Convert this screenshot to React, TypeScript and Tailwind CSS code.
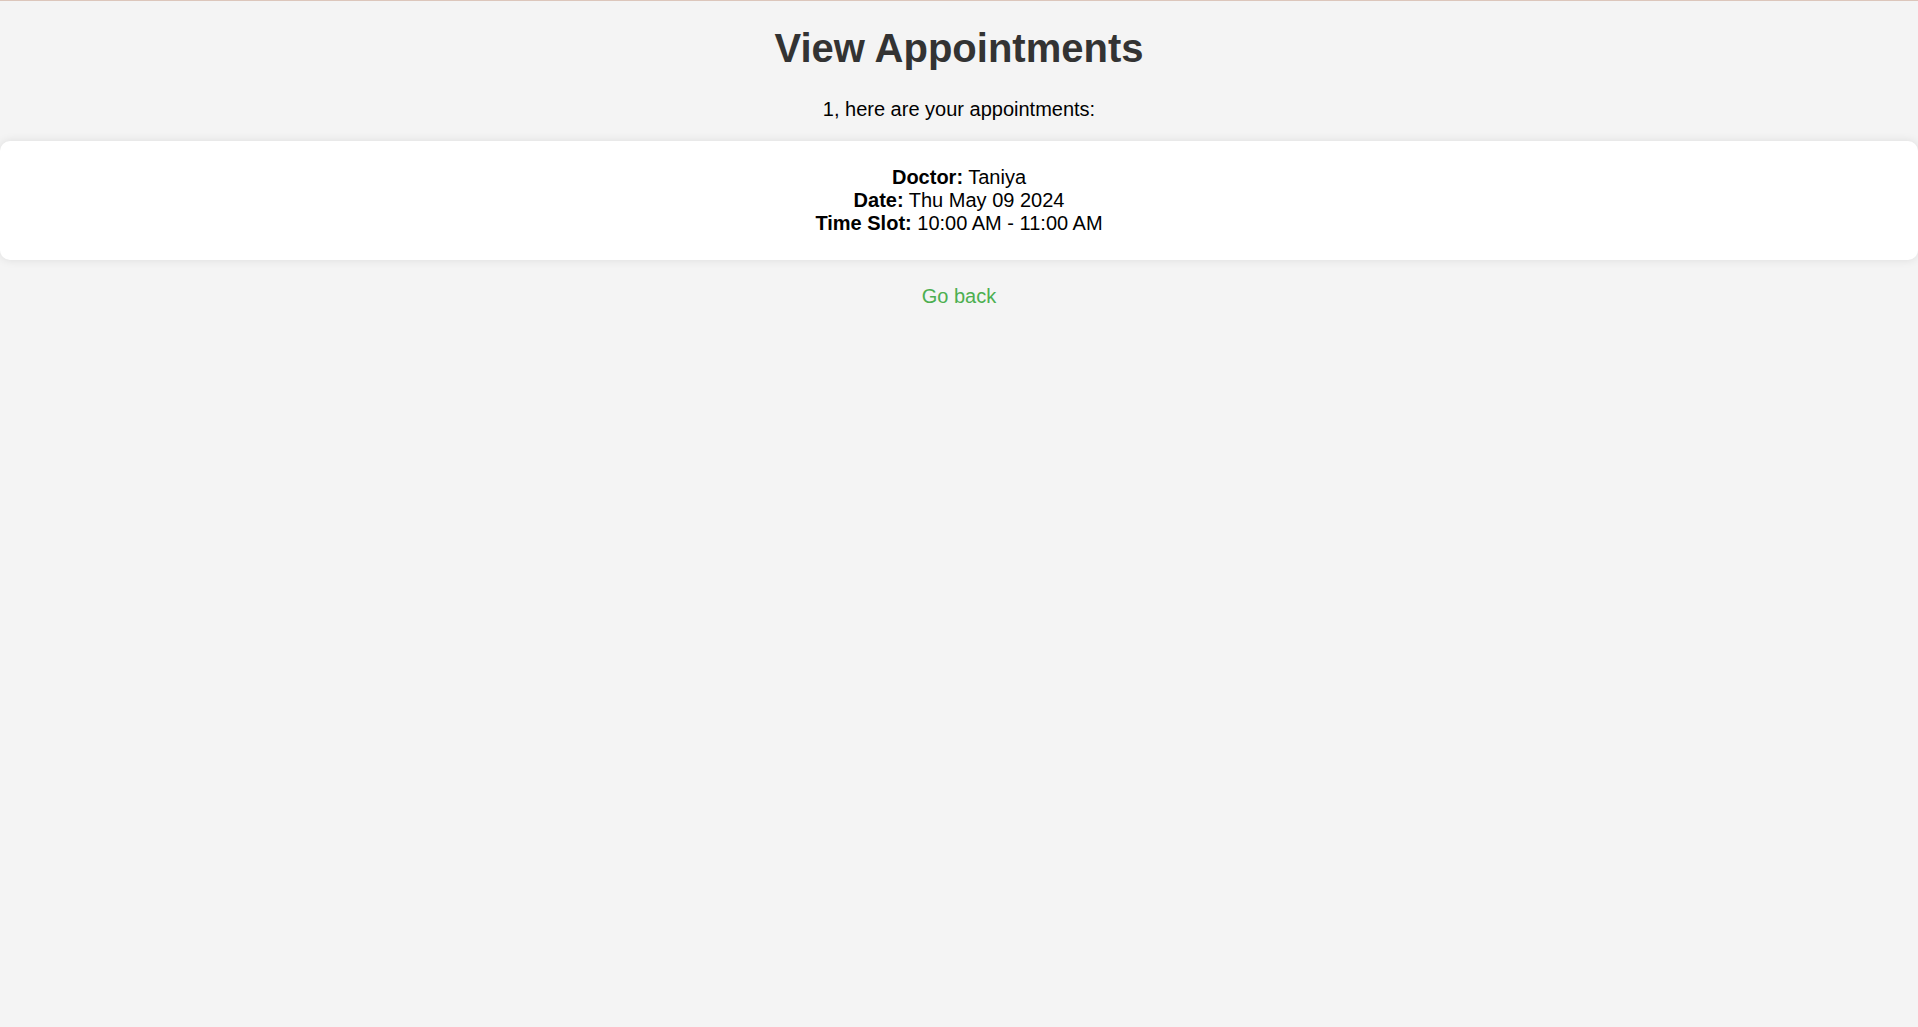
import React from "react";

const appointments = [
  { doctor: "Taniya", date: "Thu May 09 2024", slot: "10:00 AM - 11:00 AM" },
];

const App = () => {
  return (
    <div className="min-h-[1027px] bg-[#f4f4f4] border-t border-[#dcc6bb] font-['Liberation_Sans',Arial,sans-serif] text-[20px] text-black">
      <div className="text-center">
        <h1 className="mt-[25px] mb-[27px] text-[40px] leading-[45px] font-bold text-[#333333]">
          View Appointments
        </h1>
        <p className="mb-[20px] leading-[23px]">
          1, here are your appointments:
        </p>
      </div>
      {appointments.map((a, i) => (
        <div
          key={i}
          className="bg-white rounded-[10px] shadow-[0_0_10px_rgba(0,0,0,0.1)] pt-[25px] pb-[25px] text-center leading-[23px]"
        >
          <div>
            <strong>Doctor:</strong> {a.doctor}
          </div>
          <div>
            <strong>Date:</strong> {a.date}
          </div>
          <div>
            <strong>Time Slot:</strong> {a.slot}
          </div>
        </div>
      ))}
      <div className="mt-[25px] text-center leading-[23px]">
        <a href="#" className="text-[#4caf50]">
          Go back
        </a>
      </div>
    </div>
  );
};

export default App;
